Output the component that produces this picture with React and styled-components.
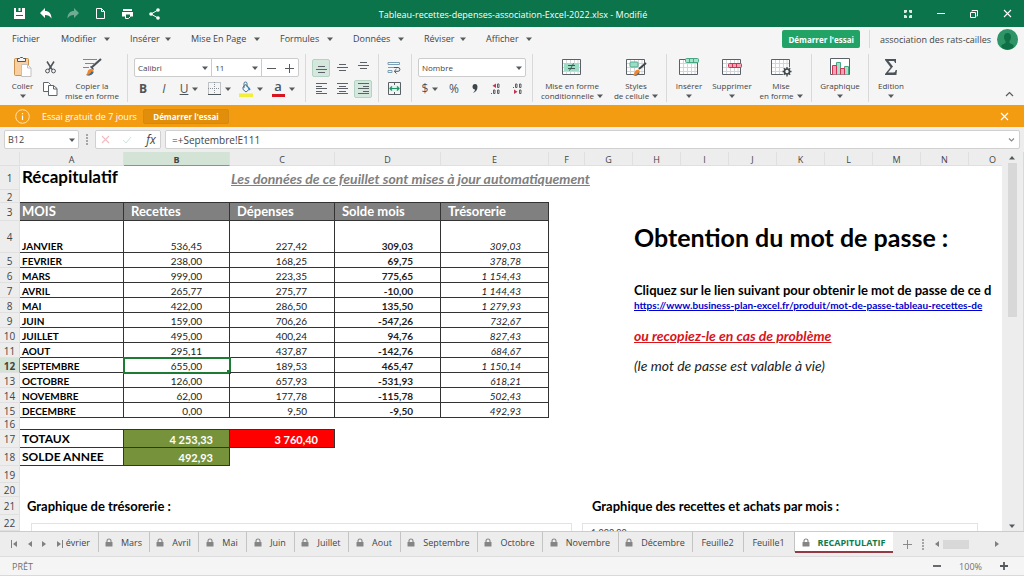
/**
*
* Spreadsheet editor
*
*/

import React from 'react';
import styled, { createGlobalStyle, css } from 'styled-components';

const color = {
  brand: '#0b744b',
  accent: '#21a366',
  trial: '#f39c12',
  chrome: '#f5f5f5',
  header: '#ededed',
  headerActive: '#d3e3d6',
  line: '#d9d9d9',
  text: '#444444',
  icon: '#4d5459',
  selection: '#1e7b34',
};

const font = {
  ui: '"Open Sans", "Noto Sans", sans-serif',
  sheet: 'Lato, "Open Sans", sans-serif',
};

const GlobalStyle = createGlobalStyle`
  * {
    box-sizing: border-box;
  }

  body {
    margin: 0;
    background: ${color.chrome};
    color: ${color.text};
    font-family: ${font.ui};
    font-size: 9px;
  }

  button,
  input,
  select {
    margin: 0;
    padding: 0;
    border: 0;
    background: none;
    color: inherit;
    font: inherit;
  }

  svg {
    display: block;
    flex: none;
  }
`;

const Page = styled.div`
  display: flex;
  flex-direction: column;
  height: 100vh;
  overflow: hidden;
`;

/* Title bar */

const TitleBar = styled.header`
  display: grid;
  grid-template-columns: 1fr auto 1fr;
  align-items: center;
  flex: none;
  height: 27px;
  padding: 0 9px 0 11px;
  background: ${color.brand};
  color: #ffffff;
`;

const TitleActions = styled.div`
  display: flex;
  gap: 11px;
`;

const WindowActions = styled.div`
  display: flex;
  justify-content: flex-end;
  gap: 17px;
`;

const Title = styled.h1`
  margin: 0;
  padding-top: 1px;
  font-size: 9px;
  font-weight: 400;
`;

const IconButton = styled.button`
  display: flex;
  align-items: center;
  justify-content: center;
  flex: none;
  width: 16px;
  height: 16px;
  opacity: ${(props) => (props.$faded ? 0.4 : 1)};
`;

/* Menu */

const Menu = styled.nav`
  display: flex;
  align-items: flex-start;
  flex: none;
  height: 24px;
  padding-left: 12px;
`;

const MenuItem = styled.button`
  display: flex;
  align-items: center;
  justify-content: space-between;
  flex: none;
  width: ${(props) => props.$width}px;
  height: 23px;
  margin-right: 20px;
  white-space: nowrap;
`;

const StartButton = styled.button`
  height: 18px;
  padding: 0 6px;
  margin: 3px 0 0 auto;
  border-radius: 2px;
  background: ${color.accent};
  color: #ffffff;
  font-size: 8px;
  font-weight: 700;
  white-space: nowrap;
`;

const Account = styled.div`
  display: flex;
  align-items: center;
  gap: 6px;
  height: 18px;
  margin: 3px 0 0 9px;
  padding: 0 6px 0 10px;
  border-left: 1px solid ${color.line};
  white-space: nowrap;
`;

/* Ribbon */

const Ribbon = styled.div`
  display: flex;
  flex: none;
  height: 54px;
  padding: 3px 0;
`;

const Group = styled.div`
  display: flex;
  flex: none;
  gap: ${(props) => props.$gap || 0}px;
  width: ${(props) => props.$width}px;
  padding-left: ${(props) => props.$indent || 0}px;
  border-right: ${(props) => (props.$last ? 0 : '1px')} solid ${color.line};
`;

const Rows = styled.div`
  display: flex;
  flex-direction: column;
  justify-content: flex-start;
  gap: 2px;
  padding-top: 4px;
`;

const Row = styled.div`
  display: flex;
  align-items: center;
  gap: ${(props) => props.$gap || 0}px;
  height: 19px;
`;

const BigButton = styled.button`
  display: flex;
  flex-direction: column;
  align-items: center;
  flex: none;
  width: ${(props) => props.$width}px;
  padding-top: 1px;
  font-size: 8px;
  line-height: 10px;
  white-space: nowrap;
`;

const BigIcon = styled.span`
  display: flex;
  align-items: center;
  justify-content: center;
  height: 23px;
  margin-bottom: 3px;
`;

const Line = styled.span`
  display: flex;
  align-items: center;
  gap: 3px;
  height: 10px;
`;

const SmallButton = styled.button`
  display: flex;
  align-items: center;
  justify-content: center;
  gap: 4px;
  flex: none;
  width: ${(props) => props.$width || 18}px;
  height: 18px;
  border: 1px solid transparent;
  border-radius: 2px;
  color: ${color.icon};
  font-size: 12px;
  ${(props) => props.$active && css`
    border-color: #b5d3c4;
    background: #d5e8de;
  `}
`;

const FieldSet = styled.div`
  display: flex;
  width: ${(props) => props.$width}px;
  height: 19px;
  border: 1px solid #cccccc;
  border-radius: 2px;
  background: #ffffff;
`;

const SelectBox = styled.label`
  display: flex;
  align-items: center;
  flex: ${(props) => props.$grow || 1};
  min-width: 0;
  padding-right: 3px;
  border-right: ${(props) => (props.$divided ? '1px' : 0)} solid #cccccc;

  select {
    flex: 1;
    min-width: 0;
    padding-left: 3px;
    appearance: none;
    font-size: 8px;
  }
`;

/* Trial banner */

const Banner = styled.div`
  display: flex;
  align-items: center;
  flex: none;
  height: 22px;
  padding: 0 12px 0 15px;
  background: ${color.trial};
  color: #ffffff;
`;

const BannerText = styled.span`
  width: 101px;
  margin-left: 12px;
  white-space: nowrap;
`;

const BannerButton = styled.button`
  width: 86px;
  height: 15px;
  border: 1px solid #d68a10;
  border-radius: 2px;
  background: #e08e0b;
  font-size: 8px;
  font-weight: 700;
  white-space: nowrap;
`;

/* Formula bar */

const FormulaBar = styled.div`
  display: flex;
  align-items: center;
  flex: none;
  height: 25px;
  padding: 0 4px;
  background: ${color.header};
`;

const Box = styled.div`
  display: flex;
  align-items: center;
  flex: ${(props) => (props.$width ? 'none' : 1)};
  width: ${(props) => (props.$width ? `${props.$width}px` : 'auto')};
  height: 19px;
  padding: 0 ${(props) => (props.$tight ? 1 : 3)}px;
  border: 1px solid #d0d0d0;
  border-radius: 2px;
  background: #ffffff;

  input {
    flex: 1;
    min-width: 0;
    outline: 0;
  }
`;

const FormulaInput = styled.input`
  padding-left: 3px;
  font-size: 10px;
`;

/* Sheet */

const SheetArea = styled.main`
  display: flex;
  flex: 1;
  min-height: 0;
  background: #ffffff;
`;

const SheetView = styled.div`
  position: relative;
  flex: 1;
  min-width: 0;
  overflow: hidden;
`;

const Sheet = styled.table`
  width: 1017px;
  table-layout: fixed;
  border-spacing: 0;
  color: #222222;
  font-family: ${font.sheet};
  font-size: 10px;
  line-height: 11px;
  white-space: nowrap;
`;

const ColumnHead = styled.th`
  height: 14px;
  padding: 2px 0 0;
  border-right: 1px solid #e0e0e0;
  border-bottom: 1px solid ${(props) => (props.$active ? '#6aa878' : '#e0e0e0')};
  background: ${(props) => (props.$active ? color.headerActive : color.header)};
  color: ${color.text};
  font-family: ${font.ui};
  font-size: 9px;
  font-weight: ${(props) => (props.$active ? 700 : 400)};
`;

const RowHead = styled.th`
  padding: 1px 0 0;
  border-right: 1px solid ${(props) => (props.$active ? '#6aa878' : '#e0e0e0')};
  border-bottom: 1px solid #e0e0e0;
  background: ${(props) => (props.$active ? color.headerActive : color.header)};
  color: ${color.text};
  font-family: ${font.ui};
  font-size: 10px;
  font-weight: ${(props) => (props.$active ? 700 : 400)};
  line-height: 10px;
`;

const SheetRow = styled.tr`
  height: ${(props) => props.$height}px;
`;

const Cell = styled.td`
  padding: 0 0 0 1px;
  vertical-align: middle;
`;

const Bordered = styled(Cell)`
  padding-left: 2px;
  border-right: 1px solid #333333;
  border-bottom: 1px solid #333333;
`;

const TopEdge = styled(Cell)`
  border-bottom: 1px solid #333333;
`;

const HeadCell = styled(Bordered)`
  padding-left: ${(props) => (props.$first ? 2 : 7)}px;
  background: #808080;
  color: #ffffff;
  font-size: 13px;
  font-weight: 700;
`;

const MonthCell = styled(Bordered)`
  color: #000000;
  font-weight: 700;
  vertical-align: bottom;
`;

const NumberCell = styled(Bordered)`
  position: relative;
  padding-right: 27px;
  font-style: ${(props) => (props.$italic ? 'italic' : 'normal')};
  font-weight: ${(props) => (props.$bold ? 700 : 400)};
  text-align: right;
  vertical-align: bottom;
  ${(props) => props.$selected && css`
    outline: 2px solid ${color.selection};
    outline-offset: -1px;

    &::after {
      position: absolute;
      right: -2px;
      bottom: -2px;
      width: 4px;
      height: 4px;
      background: ${color.selection};
      content: '';
    }
  `}
`;

const TotalLabel = styled(Bordered)`
  color: #000000;
  font-size: 12px;
  font-weight: 700;
`;

const TotalCell = styled(Bordered)`
  padding-top: 2px;
  padding-right: 16px;
  background: ${(props) => props.$fill};
  color: #ffffff;
  font-size: 11px;
  font-weight: 700;
  text-align: right;
`;

const SheetTitle = styled(Cell)`
  padding-left: 2px;
  color: #000000;
  font-size: 17px;
  font-weight: 700;
  line-height: 22px;
  vertical-align: top;
`;

const SheetNote = styled(Cell)`
  color: #808080;
  font-size: 14px;
  font-style: italic;
  font-weight: 700;
  text-decoration: underline;
`;

const BigText = styled(Cell)`
  color: #000000;
  font-size: 25px;
  font-weight: 700;
`;

const StrongText = styled(Cell)`
  padding-left: ${(props) => props.$indent || 1}px;
  color: #000000;
  font-size: 13px;
  font-weight: 700;
`;

const LinkText = styled(Cell)`
  font-weight: 700;

  a {
    color: #0000cc;
  }
`;

const WarningText = styled(Cell)`
  color: #d8141c;
  font-size: 14px;
  font-style: italic;
  font-weight: 700;
  text-decoration: underline;
`;

const ItalicText = styled(Cell)`
  font-size: 14px;
  font-style: italic;
`;

// charts float over the grid
const ChartFrame = styled.div`
  position: absolute;
  top: 371px;
  left: ${(props) => props.$left}px;
  width: ${(props) => props.$width}px;
  height: 180px;
  padding: 3px 8px;
  border: 1px solid #e3e3e3;
  background: #ffffff;
  font-family: ${font.sheet};
  line-height: 12px;
`;

const VerticalScroll = styled.div`
  display: flex;
  flex-direction: column;
  align-items: center;
  flex: none;
  width: 22px;
  padding: 1px 1px 0 0;
  border-right: 1px solid ${color.line};
  background: ${color.header};
`;

const Arrow = styled.button`
  display: flex;
  align-items: center;
  justify-content: center;
  flex: none;
  width: 10px;
  height: 10px;
`;

const VerticalTrack = styled.div`
  flex: 1;
  width: 9px;
`;

const VerticalThumb = styled.div`
  height: 43%;
  background: #d8d8d8;
`;

/* Bottom bars */

const TabBar = styled.div`
  display: flex;
  align-items: stretch;
  flex: none;
  height: 26px;
  border-top: 1px solid #cccccc;
  border-bottom: 1px solid #dddddd;
  background: ${color.header};
`;

const TabNav = styled.div`
  display: flex;
  align-items: center;
  flex: none;
  gap: 5px;
  padding-left: 9px;
`;

const Tab = styled.button`
  display: flex;
  align-items: center;
  justify-content: ${(props) => (props.$clipped ? 'flex-end' : 'center')};
  gap: 8px;
  flex: none;
  width: ${(props) => props.$width}px;
  height: 20px;
  padding-right: ${(props) => (props.$clipped ? 8 : 1)}px;
  padding-top: 1px;
  border-right: 1px solid #c4c4c4;
  overflow: hidden;
  white-space: nowrap;
  ${(props) => props.$active && css`
    height: 21px;
    border-right: 0;
    border-bottom: 2px solid #943a44;
    background: #ffffff;
    color: #0f7b4d;
    font-weight: 700;
  `}
`;

const TabTools = styled.div`
  display: flex;
  align-items: center;
  flex: 1;
  padding: 0 22px 0 6px;
`;

const HorizontalTrack = styled.div`
  flex: 1;
  height: 9px;
  margin: 0 4px 0 2px;
`;

const HorizontalThumb = styled.div`
  width: 26px;
  height: 9px;
  background: #d8d8d8;
`;

const StatusBar = styled.footer`
  display: flex;
  align-items: center;
  flex: none;
  height: 19px;
  padding: 0 12px;
  border-bottom: 1px solid ${color.line};
  color: #707070;
`;

const Zoom = styled.div`
  display: flex;
  align-items: center;
  gap: 14px;
  margin-left: auto;
`;

/* Icons */

const Caret = ({ up }) => (
  <svg width="6" height="4" viewBox="0 0 6 4" fill="#555a5e">
    <path d={up ? 'M0 3.500h6L3 0z' : 'M0 .5h6L3 4z'} />
  </svg>
);

const SideArrow = ({ right, bar }) => (
  <svg width="7" height="8" viewBox="0 0 7 8" fill="#808080">
    <path d={right ? 'M1 1v6l4-3z' : 'M6 1v6L2 4z'} />
    {bar && <path d={right ? 'M6 0h1v8H6z' : 'M0 0h1v8H0z'} />}
  </svg>
);

const Lock = () => (
  <svg width="8" height="9" viewBox="0 0 8 9">
    <path d="M2 4V3a2 2 0 0 1 4 0v1" fill="none" stroke="#858585" strokeWidth="1.1" />
    <rect x="0.5" y="4" width="7" height="4.5" rx="0.5" fill="#858585" />
  </svg>
);

const Cross = ({ size = 9, stroke = '#ffffff' }) => (
  <svg width={size} height={size} viewBox="0 0 9 9">
    <path d="M1 1l7 7M8 1l-7 7" stroke={stroke} strokeWidth="1.1" />
  </svg>
);

const SaveIcon = () => (
  <svg width="11" height="11" viewBox="0 0 11 11" fill="#ffffff">
    <path d="M0 0h2v4h6V0h3v11H0z" />
    <path d="M4.500 0h2v3h-2z" />
    <path d="M2 7h7v1H2z" fill={color.brand} />
  </svg>
);

const UndoIcon = ({ flip }) => (
  <svg width="12" height="11" viewBox="0 0 12 11" fill="#ffffff">
    <path transform={flip ? 'translate(12 0) scale(-1 1)' : undefined} d="M5 0v3c4 0 6.500 2.500 6.500 7.500C10 8 8 7 5 7v3L0 5z" />
  </svg>
);

const NewIcon = () => (
  <svg width="9" height="11" viewBox="0 0 9 11" fill="none" stroke="#ffffff">
    <path d="M.5.5h5l3 3v7h-8zM5.500.5v3h3" />
  </svg>
);

const PrintIcon = () => (
  <svg width="11" height="10" viewBox="0 0 11 10">
    <path d="M1 0h9v2H1zM0 3h11v4.500H9V5H3v2.500H0z" fill="#ffffff" />
    <path d="M3.500 5h5v2.500L6.500 9.500h-3z" fill={color.brand} stroke="#ffffff" />
  </svg>
);

const ShareIcon = () => (
  <svg width="11" height="12" viewBox="0 0 11 12" fill="#ffffff">
    <path d="M9 2L2 6l7 4" fill="none" stroke="#ffffff" />
    <circle cx="9" cy="2" r="1.800" />
    <circle cx="2" cy="6" r="1.800" />
    <circle cx="9" cy="10" r="1.800" />
  </svg>
);

const FullscreenIcon = () => (
  <svg width="8" height="8" viewBox="0 0 8 8" fill="#ffffff">
    <path d="M0 0h3v3H0zM5 0h3v3H5zM0 5h3v3H0zM5 5h3v3H5z" opacity="0.85" />
    <path d="M2 2h1v1H2zM5 2h1v1H5zM2 5h1v1H2zM5 5h1v1H5z" fill={color.brand} opacity="0.6" />
  </svg>
);

const MinimizeIcon = () => (
  <svg width="8" height="8" viewBox="0 0 8 8">
    <path d="M0 3.500h8" stroke="#ffffff" />
  </svg>
);

const RestoreIcon = () => (
  <svg width="8" height="8" viewBox="0 0 8 8" fill="none" stroke="#ffffff">
    <path d="M.5 2.500h5v5h-5zM2 1.500v-1h5.500V6h-1" />
  </svg>
);

const Avatar = () => (
  <svg width="21" height="21" viewBox="0 0 21 21">
    <circle cx="10.500" cy="10.500" r="10.500" fill="#2f9468" />
    <path d="M10.500 4c2.500 0 3.500 1.700 3.500 4 0 2-.8 3.300-1.500 4v2l4 2v2.500a10 10 0 0 1-12 0V16l4-2v-2C7.800 11.300 7 10 7 8c0-2.300 1-4 3.500-4z" fill="#0f7046" />
  </svg>
);

const PasteIcon = () => (
  <svg width="18" height="20" viewBox="0 0 18 20">
    <rect x="0.500" y="1.500" width="14" height="17" rx="1" fill="#f7cfa0" stroke="#c9924f" />
    <path d="M3.500 4.500v-3h2l1-1h2l1 1h2v3z" fill="#f5f5f5" stroke="#4d5459" />
    <path d="M7.500 7.500h6l3.500 3.500v8.500H7.500z" fill="#ffffff" stroke="#c2c2c2" />
    <path d="M13.500 7.500V11H17" fill="none" stroke="#c2c2c2" />
  </svg>
);

const CutIcon = () => (
  <svg width="11" height="13" viewBox="0 0 11 13" fill="none" stroke="#4d5459">
    <path d="M2 0.500l5 8M9 0.500l-5 8" strokeWidth="1.500" />
    <circle cx="2.500" cy="10" r="1.900" />
    <circle cx="8.500" cy="10" r="1.900" />
  </svg>
);

const CopyIcon = () => (
  <svg width="15" height="14" viewBox="0 0 15 14" fill="#ffffff" stroke="#5f666b">
    <path d="M.5.5h5l2 2v7h-7z" />
    <path d="M5.500 3.500h5l3.500 3v7H5.500zM10.500 3.500v3.500H14" />
  </svg>
);

const FormatPainterIcon = () => (
  <svg width="20" height="19" viewBox="0 0 20 19">
    <path d="M1 2.500h14M3 6.500h9M1 10.500h6" stroke="#3c9bd6" />
    <path d="M19 2L9.500 10.500" stroke="#4d5459" strokeWidth="2.200" />
    <path d="M9 9l3 3-1 1-3-3z" fill="#4d5459" />
    <path d="M4 18c2-1.500 1-4 3-5.500s5.500.5 4.500 3-4.500 3.500-7.500 2.500z" fill="#f0862a" />
    <path d="M4 18c2.500 0 4.500-1 5.500-3.500l2 .5c-.5 3-4.500 4-7.500 3z" fill="#2e6f9e" />
  </svg>
);

const BordersIcon = () => (
  <svg width="13" height="13" viewBox="0 0 13 13" fill="none" stroke="#8b9094">
    <path d="M.5.5h12v12H.5zM6.500 0v12M0 6.500h12" strokeDasharray="1 1" />
    <path d="M0 12.500h13" stroke="#4d5459" />
  </svg>
);

const FillIcon = () => (
  <svg width="14" height="16" viewBox="0 0 14 16">
    <path d="M0 12.500h14V16H0z" fill="#f3ee3c" />
    <path d="M4 6L7 3.500l3.500 4.500-3.500 3-3-2.500z" fill="#f0f6fa" stroke="#44708a" />
    <path d="M5 7V2.500a1.500 1.500 0 0 1 3 0V6" fill="none" stroke="#44708a" />
    <path d="M9 6l2 3" stroke="#2e8bc9" strokeWidth="1.500" />
  </svg>
);

const FontColorBar = styled.span`
  width: 13px;
  height: 16px;
  border-bottom: 3px solid #d9141e;
  font-size: 13px;
  font-weight: 600;
  line-height: 10px;
`;

const AlignIcon = ({ rows }) => (
  <svg width="11" height="11" viewBox="0 0 11 11" stroke="#5b6166">
    {rows.map(([x, y, width]) => (
      <path key={y} d={`M${x} ${y}.5h${width}`} />
    ))}
  </svg>
);

const WrapIcon = () => (
  <svg width="14" height="13" viewBox="0 0 14 13" fill="none">
    <path d="M1 1.500h11.500v2H1zM1 6.500h6M1 9.500h4v2H1z" stroke="#7d9fb5" />
    <path d="M7 6.500h4a1.800 1.800 0 0 1 0 3.800H8M9.500 8l-2.300 2.300 2.300 2.200" stroke="#3f5a6b" />
  </svg>
);

const MergeIcon = () => (
  <svg width="13" height="13" viewBox="0 0 13 13" fill="none">
    <path d="M.5.5h12v12H.5zM6.500 0v3M6.500 10v3" stroke="#5b6166" />
    <path d="M1 3.500h11v6H1z" fill="#dff2ea" />
    <path d="M2 6.500h9M4 4.500l-2 2 2 2M9 4.500l2 2-2 2" stroke="#1e9467" strokeWidth="1.200" />
  </svg>
);

const CommaIcon = () => (
  <svg width="6" height="9" viewBox="0 0 6 9" fill="#3f464b">
    <path d="M3 0c1.700 0 2.500 1.200 2.500 2.800C5.500 6 3.800 8 1 9c1.200-1.200 2-2.300 2-3.500C1.500 5.500.5 4.300.5 2.800S1.500 0 3 0z" />
  </svg>
);

const DecimalIcon = ({ less }) => (
  <svg width="11" height="12" viewBox="0 0 11 12" fill="none" stroke="#5b6166">
    {less
      ? <path d="M3.500 1H5v3.500H3.500zM7.500 1H9v3.500H7.500zM7.500 7H9v3.500H7.500z" />
      : <path d="M6.500 1H8v3.500H6.500zM2.500 7h1.500v3.500H2.500zM6.500 7H8v3.500H6.500z" />}
    <path d={less ? 'M2 6.500v4.500l3.500-2.200z' : 'M5 .5V5L1.500 2.800z'} fill="#c8324f" stroke="none" />
    <path d={less ? 'M1 4h1v1H1z' : 'M0 10h1v1H0z'} fill="#5b6166" stroke="none" />
  </svg>
);

const Lines = ({ children }) => (
  <svg width="22" height="20" viewBox="0 0 22 20">
    <path d="M1.500 2.500h18v15h-18z" fill="#ffffff" />
    <path d="M5.500 3v14M9.500 3v14M13.500 3v14M17 3v14M2 6.500h17M2 10.500h17M2 14.500h17" stroke="#d3d6d8" />
    <path d="M1.500 2.500h18v15h-18z" fill="none" stroke="#5b6166" />
    {children}
  </svg>
);

const ConditionalIcon = () => (
  <Lines>
    <path d="M3 6h15v8H3z" fill="#9fdcc6" />
    <path d="M7 8.500h7M7 11.500h7M12.500 6.500l-4 7" stroke="#3b5a55" />
  </Lines>
);

const StylesIcon = () => (
  <Lines>
    <rect x="5" y="5" width="8" height="5" rx="1" fill="#9fdcc6" stroke="#4fae8c" />
    <path d="M21 6l-7 6" stroke="#3f464b" strokeWidth="2" />
    <path d="M8 18c2-1 1-4 3.500-5s4 1 3 3-4 3.500-6.500 2z" fill="#f0862a" />
    <path d="M8 18c2 .5 4 0 5.500-2.500l1 .5c-1 2.500-4 3.500-6.500 2z" fill="#2e6f9e" />
  </Lines>
);

const InsertIcon = () => (
  <Lines>
    <rect x="7.500" y="1.500" width="13" height="4" rx="1" fill="#a8e0cb" stroke="#46a783" />
    <path d="M11.500 2v3M15.500 2v3" stroke="#46a783" />
  </Lines>
);

const DeleteIcon = () => (
  <Lines>
    <rect x="7.500" y="6.500" width="13" height="4" rx="1" fill="#f5a3b3" stroke="#cc3355" />
    <path d="M11.500 7v3M15.500 7v3" stroke="#cc3355" />
  </Lines>
);

const FormatIcon = () => (
  <Lines>
    <circle cx="17" cy="14.500" r="5" fill="#f5f5f5" />
    <circle cx="17" cy="14.500" r="2.500" fill="none" stroke="#3f464b" strokeWidth="1.600" />
    <path d="M17 10v2M17 17v2.500M12.500 14.500h2M19.500 14.500h2M13.800 11.300l1.400 1.400M18.800 16.300l1.400 1.400M20.200 11.300l-1.400 1.400M15.200 16.300l-1.400 1.400" stroke="#3f464b" strokeWidth="1.300" />
  </Lines>
);

const ChartIcon = () => (
  <svg width="20" height="18" viewBox="0 0 20 18">
    <path d="M.5.500h19v16H.500z" fill="#ffffff" stroke="#5b6166" />
    <path d="M6.500 16.500v-12h4v12M14.500 16.500v-8h4v8" fill="#a8e0cb" stroke="#46a783" />
    <path d="M2.500 16.500v-9h4v9M10.500 16.500v-6h4v6" fill="#f5a3b3" stroke="#cc3355" />
  </svg>
);

const SumIcon = () => (
  <svg width="12" height="16" viewBox="0 0 12 16">
    <path d="M0 0h11v4h-1C9.700 2.500 9 2 8 2H3.500L8 7.500 3 13.500h5.500c1.300 0 1.800-.8 2.200-2.500H12l-.6 5H0v-1l5.500-6.800L0 1z" fill="#4d5459" />
  </svg>
);

const InfoIcon = () => (
  <svg width="15" height="15" viewBox="0 0 15 15">
    <circle cx="7.500" cy="7.500" r="6.800" fill="none" stroke="#fbe3bb" />
    <path d="M7.500 6.500V11M7.500 4v1.300" stroke="#ffffff" strokeWidth="1.200" />
  </svg>
);

const Dots = () => (
  <svg width="2" height="11" viewBox="0 0 2 11" fill="#a5a5a5">
    <path d="M0 0h2v2H0zM0 3h2v2H0zM0 6h2v2H0zM0 9h2v2H0z" />
  </svg>
);

const Chevron = ({ up }) => (
  <svg width="9" height="6" viewBox="0 0 9 6" fill="none" stroke={up ? '#555a5e' : '#8a8a8a'}>
    <path d={up ? 'M1 5l3.500-3.500L8 5' : 'M2 1.500L4.500 4 7 1.500'} strokeWidth="1.200" />
  </svg>
);

const Sign = ({ plus, size = 9, stroke = '#555a5e', weight = 1 }) => (
  <svg width={size} height={size} viewBox="0 0 9 9" stroke={stroke} strokeWidth={weight}>
    <path d={plus ? 'M0 4.500h9M4.500 0v9' : 'M0 4.500h9'} />
  </svg>
);

/* Data */

const menus = [
  ['Modifier', 49],
  ['Insérer', 41],
  ['Mise En Page', 69],
  ['Formules', 53],
  ['Données', 51],
  ['Réviser', 42],
  ['Afficher', 46],
];

const columns = [
  ['A', 104], ['B', 106], ['C', 105], ['D', 106], ['E', 108],
  ['F', 36], ['G', 48], ['H', 48], ['I', 48], ['J', 48],
  ['K', 48], ['L', 48], ['M', 48], ['N', 48], ['O', 48],
];

const link = 'https://www.business-plan-excel.fr/produit/mot-de-passe-tableau-recettes-de';

const months = [
  ['JANVIER', '536,45', '227,42', '309,03', '309,03'],
  ['FEVRIER', '238,00', '168,25', '69,75', '378,78'],
  ['MARS', '999,00', '223,35', '775,65', '1 154,43'],
  ['AVRIL', '265,77', '275,77', '-10,00', '1 144,43'],
  ['MAI', '422,00', '286,50', '135,50', '1 279,93'],
  ['JUIN', '159,00', '706,26', '-547,26', '732,67'],
  ['JUILLET', '495,00', '400,24', '94,76', '827,43'],
  ['AOUT', '295,11', '437,87', '-142,76', '684,67'],
  ['SEPTEMBRE', '655,00', '189,53', '465,47', '1 150,14'],
  ['OCTOBRE', '126,00', '657,93', '-531,93', '618,21'],
  ['NOVEMBRE', '62,00', '177,78', '-115,78', '502,43'],
  ['DECEMBRE', '0,00', '9,50', '-9,50', '492,93'],
];

// texts that stand in column H, by row number
const notes = {
  4: <BigText>Obtention du mot de passe :</BigText>,
  7: <StrongText>Cliquez sur le lien suivant pour obtenir le mot de passe de ce d</StrongText>,
  8: <LinkText><a href={link}>{link}</a></LinkText>,
  10: <WarningText>ou recopiez-le en cas de problème</WarningText>,
  12: <ItalicText>(le mot de passe est valable à vie)</ItalicText>,
};

const tabs = [
  ['Mars', 51], ['Avril', 49], ['Mai', 48], ['Juin', 48], ['Juillet', 54],
  ['Aout', 52], ['Septembre', 77], ['Octobre', 65], ['Novembre', 76], ['Décembre', 74],
];

const alignments = {
  bottom: [[2, 4, 7], [0, 7, 11], [2, 10, 7]],
  middle: [[2, 2, 7], [0, 5, 11], [2, 8, 7]],
  top: [[2, 0, 7], [0, 3, 11], [2, 6, 7]],
  left: [[0, 0, 11], [0, 3, 6], [0, 5, 11], [0, 8, 6], [0, 10, 11]],
  center: [[0, 0, 11], [2, 3, 7], [0, 5, 11], [2, 8, 7], [0, 10, 11]],
  right: [[0, 0, 11], [5, 3, 6], [0, 5, 11], [5, 8, 6], [0, 10, 11]],
};

function Select({ label, value, grow, divided }) {
  return (
    <SelectBox $grow={grow} $divided={divided}>
      <select aria-label={label} defaultValue={value}>
        <option>{value}</option>
      </select>
      <Caret />
    </SelectBox>
  );
}

function RibbonButton({ icon, lines, width, caretBelow, caretInline }) {
  return (
    <BigButton $width={width}>
      <BigIcon>{icon}</BigIcon>
      {lines.map((line, index) => (
        <Line key={line}>
          {line}
          {caretInline && index === lines.length - 1 && <Caret />}
        </Line>
      ))}
      {caretBelow && <Line><Caret /></Line>}
    </BigButton>
  );
}

function SheetLine({ number, height, active, children }) {
  return (
    <SheetRow $height={height}>
      <RowHead scope="row" $active={active}>{number}</RowHead>
      {children}
    </SheetRow>
  );
}

const CollapseButton = styled(IconButton)`
  align-self: flex-end;
  margin: 0 7px 0 auto;
`;

function Toolbar() {
  return (
    <Ribbon>
      <Group $width={128} $indent={5}>
        <RibbonButton icon={<PasteIcon />} lines={['Coller']} width={35} caretBelow />
        <Rows>
          <Row><SmallButton $width={20} aria-label="Couper"><CutIcon /></SmallButton></Row>
          <Row><SmallButton $width={20} aria-label="Copier"><CopyIcon /></SmallButton></Row>
        </Rows>
        <RibbonButton icon={<FormatPainterIcon />} lines={['Copier la', 'mise en forme']} width={64} />
      </Group>
      <Group $width={178} $indent={6}>
        <Rows>
          <FieldSet $width={165}>
            <Select label="Police" value="Calibri" grow={8} divided />
            <Select label="Taille" value="11" grow={5} divided />
            <SmallButton aria-label="Réduire"><Sign /></SmallButton>
            <SmallButton aria-label="Agrandir"><Sign plus /></SmallButton>
          </FieldSet>
          <Row $gap={3}>
            <SmallButton><b>B</b></SmallButton>
            <SmallButton><i>I</i></SmallButton>
            <SmallButton $width={26}><u>U</u><Caret /></SmallButton>
            <SmallButton $width={28} aria-label="Bordures"><BordersIcon /><Caret /></SmallButton>
            <SmallButton $width={30} aria-label="Remplissage"><FillIcon /><Caret /></SmallButton>
            <SmallButton $width={28}><FontColorBar>a</FontColorBar><Caret /></SmallButton>
          </Row>
        </Rows>
      </Group>
      <Group $width={106} $indent={6} $gap={6}>
        <Rows>
          <Row $gap={3}>
            <SmallButton $active aria-label="En bas"><AlignIcon rows={alignments.bottom} /></SmallButton>
            <SmallButton aria-label="Au milieu"><AlignIcon rows={alignments.middle} /></SmallButton>
            <SmallButton aria-label="En haut"><AlignIcon rows={alignments.top} /></SmallButton>
          </Row>
          <Row $gap={3}>
            <SmallButton aria-label="À gauche"><AlignIcon rows={alignments.left} /></SmallButton>
            <SmallButton aria-label="Centrer"><AlignIcon rows={alignments.center} /></SmallButton>
            <SmallButton $active aria-label="À droite"><AlignIcon rows={alignments.right} /></SmallButton>
          </Row>
        </Rows>
        <Group $width={1} />
        <Rows>
          <Row><SmallButton aria-label="Renvoyer à la ligne"><WrapIcon /></SmallButton></Row>
          <Row><SmallButton aria-label="Fusionner"><MergeIcon /></SmallButton></Row>
        </Rows>
      </Group>
      <Group $width={121} $indent={6}>
        <Rows>
          <FieldSet $width={108}>
            <Select label="Format" value="Nombre" />
          </FieldSet>
          <Row $gap={3}>
            <SmallButton $width={24}>$<Caret /></SmallButton>
            <SmallButton>%</SmallButton>
            <SmallButton aria-label="Séparateur de milliers"><CommaIcon /></SmallButton>
            <SmallButton aria-label="Ajouter une décimale"><DecimalIcon /></SmallButton>
            <SmallButton aria-label="Retirer une décimale"><DecimalIcon less /></SmallButton>
          </Row>
        </Rows>
      </Group>
      <Group $width={134} $indent={4}>
        <RibbonButton icon={<ConditionalIcon />} lines={['Mise en forme', 'conditionnelle']} width={70} caretInline />
        <RibbonButton icon={<StylesIcon />} lines={['Styles', 'de cellule']} width={58} caretInline />
      </Group>
      <Group $width={145}>
        <RibbonButton icon={<InsertIcon />} lines={['Insérer']} width={44} caretBelow />
        <RibbonButton icon={<DeleteIcon />} lines={['Supprimer']} width={42} caretBelow />
        <RibbonButton icon={<FormatIcon />} lines={['Mise', 'en forme']} width={56} caretInline />
      </Group>
      <Group $width={57}>
        <RibbonButton icon={<ChartIcon />} lines={['Graphique']} width={56} caretBelow />
      </Group>
      <Group $width={46} $last>
        <RibbonButton icon={<SumIcon />} lines={['Edition']} width={44} caretBelow />
      </Group>
      <CollapseButton aria-label="Réduire le ruban"><Chevron up /></CollapseButton>
    </Ribbon>
  );
}

function Grid() {
  return (
    <Sheet>
      <colgroup>
        <col width="20" />
        {columns.map(([name, width]) => <col key={name} width={width} />)}
      </colgroup>
      <thead>
        <tr>
          <ColumnHead aria-label="Tout" />
          {columns.map(([name]) => (
            <ColumnHead key={name} scope="col" $active={name === 'B'}>{name}</ColumnHead>
          ))}
        </tr>
      </thead>
      <tbody>
        <SheetLine number={1} height={24}>
          <SheetTitle>Récapitulatif</SheetTitle>
          <Cell />
          <SheetNote>Les données de ce feuillet sont mises à jour automatiquement</SheetNote>
        </SheetLine>
        <SheetLine number={2} height={13}>
          <TopEdge colSpan={5} />
        </SheetLine>
        <SheetLine number={3} height={18}>
          <HeadCell $first>MOIS</HeadCell>
          <HeadCell>Recettes</HeadCell>
          <HeadCell>Dépenses</HeadCell>
          <HeadCell>Solde mois</HeadCell>
          <HeadCell>Trésorerie</HeadCell>
        </SheetLine>
        {months.map(([name, income, expense, balance, cash], index) => {
          const number = index + 4;
          const selected = number === 12;
          return (
            <SheetLine key={name} number={number} height={index === 0 ? 32 : 15} active={selected}>
              <MonthCell>{name}</MonthCell>
              <NumberCell $selected={selected}>{income}</NumberCell>
              <NumberCell>{expense}</NumberCell>
              <NumberCell $bold>{balance}</NumberCell>
              <NumberCell $italic>{cash}</NumberCell>
              <Cell />
              <Cell />
              {notes[number]}
            </SheetLine>
          );
        })}
        <SheetLine number={16} height={12}>
          <TopEdge colSpan={3} />
        </SheetLine>
        <SheetLine number={17} height={18}>
          <TotalLabel>TOTAUX</TotalLabel>
          <TotalCell $fill="#76933c">4 253,33</TotalCell>
          <TotalCell $fill="#ff0000">3 760,40</TotalCell>
        </SheetLine>
        <SheetLine number={18} height={18}>
          <TotalLabel>SOLDE ANNEE</TotalLabel>
          <TotalCell $fill="#76933c">492,93</TotalCell>
        </SheetLine>
        <SheetLine number={19} height={17} />
        <SheetLine number={20} height={14} />
        <SheetLine number={21} height={18}>
          <StrongText $indent={7}>Graphique de trésorerie :</StrongText>
          <Cell colSpan={5} />
          <StrongText $indent={7}>Graphique des recettes et achats par mois :</StrongText>
        </SheetLine>
        <SheetLine number={22} height={16} />
      </tbody>
    </Sheet>
  );
}

function SheetTabs() {
  return (
    <TabBar>
      <TabNav>
        <Arrow aria-label="Première feuille"><SideArrow bar /></Arrow>
        <Arrow aria-label="Feuille précédente"><SideArrow /></Arrow>
        <Arrow aria-label="Feuille suivante"><SideArrow right /></Arrow>
        <Arrow aria-label="Dernière feuille"><SideArrow right bar /></Arrow>
      </TabNav>
      <Tab $width={35} $clipped>évrier</Tab>
      {tabs.map(([name, width]) => (
        <Tab key={name} $width={width}><Lock />{name}</Tab>
      ))}
      <Tab $width={51}>Feuille2</Tab>
      <Tab $width={51}>Feuille1</Tab>
      <Tab $width={98} $active><Lock />RECAPITULATIF</Tab>
      <TabTools>
        <IconButton aria-label="Ajouter une feuille"><Sign plus stroke="#8a8a8a" /></IconButton>
        <IconButton as="span"><Dots /></IconButton>
        <Arrow aria-label="Défiler à gauche"><SideArrow /></Arrow>
        <HorizontalTrack><HorizontalThumb /></HorizontalTrack>
        <Arrow aria-label="Défiler à droite"><SideArrow right /></Arrow>
      </TabTools>
    </TabBar>
  );
}

const CloseBanner = styled(IconButton)`
  margin-left: auto;
`;

const ValidateButton = styled(IconButton)`
  margin-left: 6px;
`;

const FxButton = styled(IconButton)`
  margin-left: auto;
  font-size: 12px;
  font-style: italic;
`;

const FormulaBox = styled(Box)`
  margin-left: 4px;
`;

function App() {
  return (
    <Page>
      <GlobalStyle />
      <TitleBar>
        <TitleActions>
          <IconButton aria-label="Enregistrer"><SaveIcon /></IconButton>
          <IconButton aria-label="Annuler"><UndoIcon /></IconButton>
          <IconButton aria-label="Rétablir" $faded><UndoIcon flip /></IconButton>
          <IconButton aria-label="Nouveau"><NewIcon /></IconButton>
          <IconButton aria-label="Imprimer"><PrintIcon /></IconButton>
          <IconButton aria-label="Partager"><ShareIcon /></IconButton>
        </TitleActions>
        <Title>Tableau-recettes-depenses-association-Excel-2022.xlsx - Modifié</Title>
        <WindowActions>
          <IconButton aria-label="Plein écran"><FullscreenIcon /></IconButton>
          <IconButton aria-label="Minimiser"><MinimizeIcon /></IconButton>
          <IconButton aria-label="Restaurer"><RestoreIcon /></IconButton>
          <IconButton aria-label="Fermer"><Cross /></IconButton>
        </WindowActions>
      </TitleBar>
      <Menu>
        <MenuItem $width={29}>Fichier</MenuItem>
        {menus.map(([name, width]) => (
          <MenuItem key={name} $width={width}>{name}<Caret /></MenuItem>
        ))}
        <StartButton>Démarrer l'essai</StartButton>
        <Account>association des rats-cailles<Avatar /></Account>
      </Menu>
      <Toolbar />
      <Banner>
        <InfoIcon />
        <BannerText>Essai gratuit de 7 jours</BannerText>
        <BannerButton>Démarrer l'essai</BannerButton>
        <CloseBanner aria-label="Fermer le message"><Cross /></CloseBanner>
      </Banner>
      <FormulaBar>
        <Box $width={75}>
          <input aria-label="Cellule" defaultValue="B12" />
          <Caret />
        </Box>
        <IconButton as="span"><Dots /></IconButton>
        <Box $width={66} $tight>
          <IconButton aria-label="Annuler la saisie" $faded><Cross stroke="#e05a6a" /></IconButton>
          <ValidateButton aria-label="Valider" $faded>
            <svg width="10" height="8" viewBox="0 0 10 8" fill="none" stroke="#7fc4a4">
              <path d="M1 4l3 3 5-6" />
            </svg>
          </ValidateButton>
          <FxButton>fx</FxButton>
        </Box>
        <FormulaBox>
          <FormulaInput aria-label="Formule" defaultValue="=+Septembre!E111" />
          <Chevron />
        </FormulaBox>
      </FormulaBar>
      <SheetArea>
        <SheetView>
          <Grid />
          <ChartFrame $left={31} $width={541} />
          <ChartFrame $left={582} $width={396}>1 000,00</ChartFrame>
        </SheetView>
        <VerticalScroll>
          <Arrow aria-label="Défiler vers le haut"><Caret up /></Arrow>
          <VerticalTrack><VerticalThumb /></VerticalTrack>
          <Arrow aria-label="Défiler vers le bas"><Caret /></Arrow>
        </VerticalScroll>
      </SheetArea>
      <SheetTabs />
      <StatusBar>
        PRÊT
        <Zoom>
          <IconButton aria-label="Zoom arrière"><Sign size={8} weight={2} /></IconButton>
          100%
          <IconButton aria-label="Zoom avant"><Sign plus size={8} weight={2} /></IconButton>
        </Zoom>
      </StatusBar>
    </Page>
  );
}

export default App;
